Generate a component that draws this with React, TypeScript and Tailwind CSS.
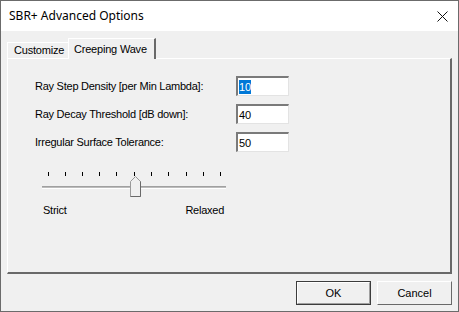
import React from "react";

const ticks = [49, 66, 83, 100, 117, 135, 152, 169, 187, 204, 221];

function Field({ label, value, selected }: { label: string; value: string; selected?: boolean }) {
    return (
        <div className="flex items-center h-[20px]">
            <span className="w-[201px] text-[11px] tracking-[-0.25px] text-black">{label}</span>
            <div className="w-[53px] h-[20px] bg-white border-t-2 border-l-2 border-t-[#7a7a7a] border-l-[#7a7a7a] border-r border-b border-r-[#e3e3e3] border-b-[#e3e3e3] flex items-center pl-[1px]">
                {selected ? (
                    <span className="bg-[#0078d7] text-white text-[11px] leading-[14px]">
                        {value}
                    </span>
                ) : (
                    <span className="text-[11px] leading-[14px] text-black">{value}</span>
                )}
            </div>
        </div>
    );
}

export default function App() {
    return (
        <div
            className="w-[459px] h-[312px] border border-[#6b6b6b] bg-[#f0f0f0] flex flex-col overflow-hidden"
            style={{ fontFamily: '"Liberation Sans", Arial, sans-serif' }}
        >
            {/* title bar */}
            <div className="h-[30px] bg-white flex items-center justify-between pl-[8px] pr-[10px]">
                <span
                    className="text-[12px] text-black"
                    style={{ fontFamily: '"Noto Sans", sans-serif' }}
                >
                    SBR+ Advanced Options
                </span>
                <svg width="11" height="11" viewBox="0 0 11 11">
                    <path d="M0.5 0.5 L10.5 10.5 M10.5 0.5 L0.5 10.5" stroke="#111" strokeWidth="1" />
                </svg>
            </div>

            <div className="flex-1 flex flex-col pl-[6px] pr-[6px] pt-[7px]">
                {/* tabs */}
                <div className="h-[20px] flex items-end relative z-10 tracking-[-0.2px]">
                    <div className="w-[61px] h-[16px] border-t border-l border-white flex items-center pl-[6px] text-[11px] text-black">
                        Customize
                    </div>
                    <div className="w-[88px] h-[21px] -mb-[1px] bg-[#f0f0f0] border-t border-l border-white border-r-2 border-r-[#696969] flex items-start pt-[2px] pl-[5px] text-[11px] text-black">
                        Creeping Wave
                    </div>
                </div>

                {/* panel */}
                <div className="w-[445px] h-[216px] border-t border-l border-white border-r-2 border-b-2 border-r-[#696969] border-b-[#696969] flex flex-col pl-[27px] pt-[17px]">
                    <div className="flex flex-col gap-[8px]">
                        <Field label="Ray Step Density [per Min Lambda]:" value="10" selected />
                        <Field label="Ray Decay Threshold [dB down]:" value="40" />
                        <Field label="Irregular Surface Tolerance:" value="50" />
                    </div>

                    {/* slider */}
                    <div className="relative w-[200px] h-[30px] mt-[20px] -ml-[1px]">
                        {ticks.map((t) => (
                            <div
                                key={t}
                                className="absolute top-0 w-[1px] h-[4px] bg-black"
                                style={{ left: t - 35 }}
                            />
                        ))}
                        <div className="absolute left-[8px] top-[14px] w-[184px] h-[3px] border-t border-[#a0a0a0] bg-[#bcbcbc] border-b border-b-white" />
                        <svg className="absolute left-[96px] top-[4px]" width="11" height="21" viewBox="0 0 11 21">
                            <path d="M0.5 5.5 L5.5 0.5 L10.5 5.5 L10.5 20.5 L0.5 20.5 Z" fill="#f0f0f0" stroke="#9a9a9a" />
                            <path d="M10.5 5.5 L10.5 20.5 L0.5 20.5" fill="none" stroke="#696969" />
                        </svg>
                    </div>
                    <div className="w-[181px] ml-[8px] flex justify-between text-[11px] tracking-[-0.25px] text-black">
                        <span>Strict</span>
                        <span>Relaxed</span>
                    </div>
                </div>

                {/* buttons */}
                <div className="flex justify-end gap-[6px] pt-[7px]">
                    <button className="w-[75px] h-[24px] border border-[#3c3c3c] bg-[#f0f0f0] text-[11px] text-black flex items-center justify-center">
                        <span className="w-full h-full border-t border-l border-white border-r border-b border-r-[#a0a0a0] border-b-[#a0a0a0] flex items-center justify-center">
                            OK
                        </span>
                    </button>
                    <button className="w-[75px] h-[24px] border-t border-l border-white border-r border-b border-r-[#696969] border-b-[#696969] bg-[#f0f0f0] text-[11px] text-black flex items-center justify-center">
                        Cancel
                    </button>
                </div>
            </div>
        </div>
    );
}
